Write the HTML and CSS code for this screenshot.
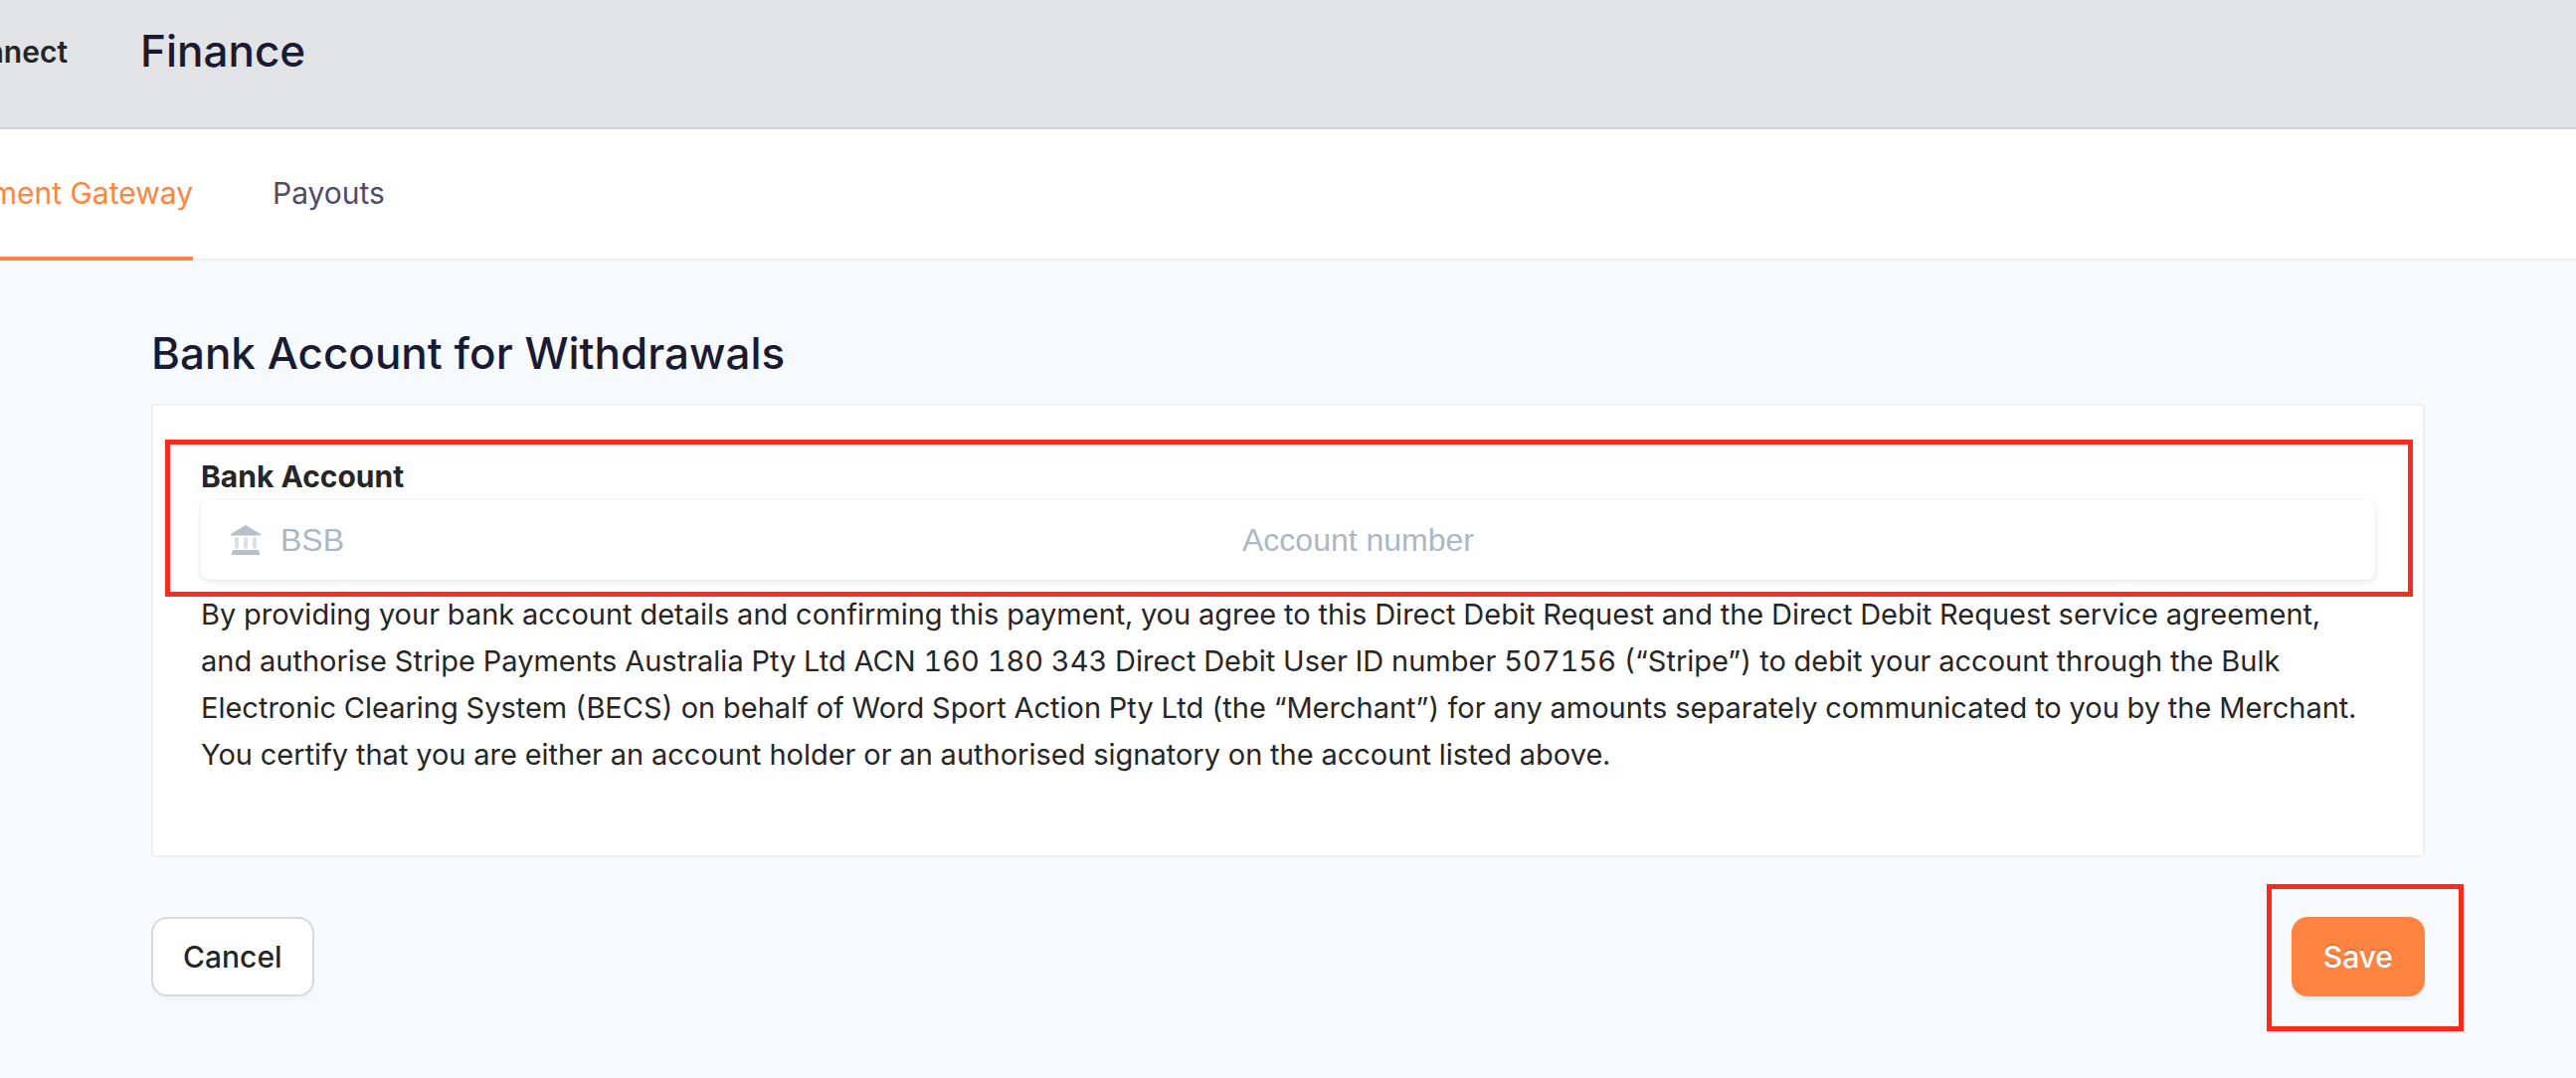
FILE: index.html
```html
<!DOCTYPE html>
<html lang="en">
<head>
<meta charset="utf-8">
<title>Finance</title>
<meta name="viewport" content="width=device-width, initial-scale=1">
<link rel="stylesheet" href="styles.css">
</head>
<body>
<header class="topbar">
  <div class="brand"><span>Connect</span></div>
  <h1 class="title">Finance</h1>
</header>
<nav class="tabs" aria-label="Finance sections">
  <div class="tab-clip"><a class="tab tab-active" href="#gateway" aria-current="page">Payment Gateway</a></div>
  <a class="tab" href="#payouts">Payouts</a>
</nav>
<main class="content">
  <h2 class="title">Bank Account for Withdrawals</h2>
  <form>
    <section class="card">
      <div class="bank marked">
        <label class="label" for="bsb">Bank Account</label>
        <div class="field">
          <svg class="bank-icon" viewBox="0 0 30 30" aria-hidden="true">
            <path d="M15 0 30 9v1.500H0V9z" fill="#b8bfcc"/>
            <path d="M4 12.500h4v11H4zM13 12.500h4v11h-4zM22 12.500h4v11h-4z" fill="#dcdfe7"/>
            <path d="M3 25h24q1 0 1.300 1l1.200 4H.5l1.200-4Q2 25 3 25z" fill="#b8bfcc"/>
          </svg>
          <input class="input" id="bsb" type="text" placeholder="BSB">
          <input class="input" type="text" placeholder="Account number" aria-label="Account number">
        </div>
      </div>
      <p class="terms">By providing your bank account details and confirming this payment, you agree to this Direct Debit Request and the Direct Debit Request service agreement, and authorise Stripe Payments Australia Pty Ltd ACN 160 180 343 Direct Debit User ID number 507156 (“Stripe”) to debit your account through the Bulk Electronic Clearing System (BECS) on behalf of Word Sport Action Pty Ltd (the “Merchant”) for any amounts separately communicated to you by the Merchant. You certify that you are either an account holder or an authorised signatory on the account listed above.</p>
    </section>
    <div class="actions">
      <button class="button" type="button">Cancel</button>
      <div class="save marked"><button class="button button-primary" type="submit">Save</button></div>
    </div>
  </form>
</main>
</body>
</html>
```
FILE: styles.css
```css
* { box-sizing: border-box; }
body {
  margin: 0;
  min-height: 100vh;
  background: #f7fafd;
  color: #262626;
  font-family: Inter, "Liberation Sans", sans-serif;
  font-size: 30px;
  line-height: 47px;
}
.topbar {
  display: flex;
  gap: 73px;
  height: 130px;
  padding-top: 18px;
  background: #e2e3e7;
  border-bottom: 2px solid #d4d4dc;
}
.brand {
  display: flex;
  justify-content: flex-end;
  width: 68px;
  padding-top: 10px;
  overflow: hidden;
  font-weight: 600;
  line-height: 48px;
}
.title {
  margin: 0;
  color: #1a1a33;
  font-size: 44px;
  font-weight: 500;
  line-height: 66px;
}
.tabs {
  display: flex;
  gap: 80px;
  height: 132px;
  background: #fff;
  box-shadow: inset 0 -2px #f0f0f0;
}
.tab-clip {
  display: flex;
  justify-content: flex-end;
  width: 194px;
  overflow: hidden;
}
.tab {
  flex: none;
  height: 132px;
  color: #4c4c6d;
  line-height: 128px;
  text-decoration: none;
}
.tab-active {
  color: #ff8341;
  border-bottom: 4px solid #ff8341;
}
.content { padding: 60px 152px 40px; }
.card {
  margin-top: 18px;
  padding: 48px 48px 78px;
  background: #fff;
  border: 2px solid #f0f0f0;
  border-radius: 4px;
}
.marked { position: relative; }
.marked::after {
  content: "";
  position: absolute;
  border: 5px solid #ff2a1c;
  pointer-events: none;
}
.bank::after { inset: -14px -38px -17px -36px; }
.save::after { inset: -33px -39px -35px -25px; }
.label {
  display: block;
  font-weight: 700;
}
.field {
  display: grid;
  grid-template-columns: 30px 1fr 1139px;
  align-items: center;
  height: 80px;
  padding-left: 30px;
  background: #fff;
  border-radius: 8px;
  box-shadow: 0 2px 6px rgba(50, 60, 120, 0.12), 0 0 2px rgba(50, 60, 120, 0.06);
}
.bank-icon { width: 30px; height: 30px; }
.input {
  width: 100%;
  height: 80px;
  padding: 0;
  border: 0;
  background: none;
  font: 32px "Liberation Sans", Arial, sans-serif;
}
#bsb { padding-left: 20px; }
.input::placeholder { color: #aab7c4; opacity: 1; }
.terms {
  margin: 11px 0 0;
  font-size: 29px;
  font-variant-numeric: tabular-nums;
}
.actions {
  display: flex;
  justify-content: space-between;
  margin-top: 60px;
}
.button {
  display: block;
  height: 80px;
  padding: 0 30px;
  border: 2px solid #d9d9d9;
  border-radius: 16px;
  background: #fff;
  box-shadow: 0 4px 0 rgba(0, 0, 0, 0.02);
  color: #262626;
  font: 500 30px Inter, "Liberation Sans", sans-serif;
}
.button-primary {
  border-color: #ff8341;
  background: #ff8341;
  box-shadow: 0 4px 0 rgba(0, 0, 0, 0.04);
  color: #fff;
  text-shadow: 0 -2px 0 rgba(0, 0, 0, 0.12);
}
```
